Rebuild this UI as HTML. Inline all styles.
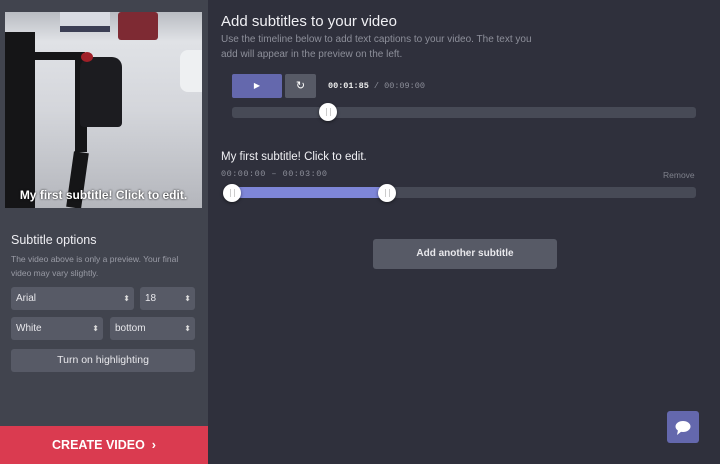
<!DOCTYPE html>
<html><head><style>
*{margin:0;padding:0;box-sizing:border-box}
body{width:720px;height:464px;overflow:hidden;background:#2f303c;font-family:"Liberation Sans",sans-serif;position:relative}
.left{position:absolute;left:0;top:0;width:208px;height:464px;background:#41444e}
.a{position:absolute}
.sel{position:absolute;background:#575a66;border-radius:3px;color:#e8e8ec;font-size:10px;padding-left:5px;line-height:24px;height:23px}
.sel:after{content:"⬍";position:absolute;right:4px;top:0;font-size:8px;color:#ddd}
.mono{font-family:"Liberation Mono",monospace}
.thumb{position:absolute;width:18px;height:18px;border-radius:50%;background:#fff;box-shadow:0 1px 3px rgba(0,0,0,.5)}
.thumb:after{content:"";position:absolute;left:7px;top:5px;width:3px;height:8px;border-left:1px solid #ccc;border-right:1px solid #ccc}
</style></head><body>
<div class="left">
 <div class="a" style="left:5px;top:12px;width:197px;height:196px;overflow:hidden;background:linear-gradient(180deg,#b9bcc2 0%,#e0e2e6 15%,#d4d6db 50%,#b4b6bc 100%)">
  <div class="a" style="left:55px;top:0;width:50px;height:20px;background:#d8dbe2;border-bottom:6px solid #3c3f55"></div>
  <div class="a" style="left:113px;top:0;width:40px;height:28px;background:#7e2a33;border-radius:3px"></div>
  <div class="a" style="left:175px;top:38px;width:25px;height:42px;background:#eef0f2;border-radius:8px 0 0 8px"></div>
  <div class="a" style="left:0;top:20px;width:30px;height:176px;background:#151517"></div>
  <div class="a" style="left:25px;top:40px;width:55px;height:8px;background:#151517"></div>
  <div class="a" style="left:70px;top:45px;width:12px;height:95px;background:#151517"></div>
  <div class="a" style="left:75px;top:45px;width:42px;height:70px;background:#1c1c20;border-radius:12px 10px 4px 4px"></div>
  <div class="a" style="left:76px;top:40px;width:12px;height:10px;background:#a02028;border-radius:50%"></div>
  <div class="a" style="left:65px;top:140px;width:15px;height:56px;background:#151517;transform:rotate(8deg)"></div>
  <div class="a" style="left:0;top:176px;width:197px;text-align:center;color:#fff;font-weight:bold;font-size:12px;text-shadow:0 0 2px #000">My first subtitle! Click to edit.</div>
 </div>
 <div class="a" style="left:11px;top:233px;color:#eeeef2;font-size:12.5px">Subtitle options</div>
 <div class="a" style="left:11px;top:252px;width:185px;color:#9a9ca6;font-size:8.5px;line-height:14px">The video above is only a preview. Your final video may vary slightly.</div>
 <div class="sel" style="left:11px;top:287px;width:123px">Arial</div>
 <div class="sel" style="left:140px;top:287px;width:55px">18</div>
 <div class="sel" style="left:11px;top:317px;width:92px">White</div>
 <div class="sel" style="left:110px;top:317px;width:85px">bottom</div>
 <div class="a" style="left:11px;top:349px;width:184px;height:23px;background:#575a66;border-radius:3px;color:#e8e8ec;font-size:10.5px;text-align:center;line-height:23px">Turn on highlighting</div>
 <div class="a" style="left:0;top:426px;width:208px;height:38px;background:#da3b50;color:#fff;font-size:12.5px;font-weight:bold;text-align:center;line-height:38px">CREATE VIDEO &nbsp;›</div>
</div>
<div class="a" style="left:221px;top:13px;color:#f0f0f4;font-size:15px">Add subtitles to your video</div>
<div class="a" style="left:221px;top:32px;width:322px;color:#8d8f9a;font-size:10px;line-height:15px">Use the timeline below to add text captions to your video. The text you add will appear in the preview on the left.</div>
<div class="a" style="left:232px;top:74px;width:50px;height:24px;background:#6468ad;border-radius:2px;color:#fff;font-size:8px;text-align:center;line-height:24px">▶</div>
<div class="a" style="left:285px;top:74px;width:31px;height:24px;background:#575a66;border-radius:2px;color:#fff;font-size:11px;text-align:center;line-height:24px">↻</div>
<div class="a mono" style="left:328px;top:81px;font-size:8.5px;color:#eee;font-weight:bold">00:01:85 <span style="color:#8d8f9a;font-weight:normal">/ 00:09:00</span></div>
<div class="a" style="left:232px;top:107px;width:464px;height:11px;background:#474a56;border-radius:3px"></div>
<div class="thumb" style="left:319px;top:103px"></div>
<div class="a" style="left:221px;top:151px;color:#f0f0f4;font-size:11.5px">My first subtitle! Click to edit.</div>
<div class="a mono" style="left:221px;top:169px;font-size:8.5px;color:#8d8f9a;letter-spacing:.5px">00:00:00 – 00:03:00</div>
<div class="a" style="left:663px;top:170px;font-size:8.5px;color:#7e808b">Remove</div>
<div class="a" style="left:232px;top:187px;width:464px;height:11px;background:#474a56;border-radius:3px"></div>
<div class="a" style="left:232px;top:187px;width:156px;height:11px;background:#7e86d8;border-radius:3px 0 0 3px"></div>
<div class="thumb" style="left:223px;top:184px"></div>
<div class="thumb" style="left:378px;top:184px"></div>
<div class="a" style="left:373px;top:239px;width:184px;height:30px;background:#575a66;border-radius:3px;color:#e8e8ec;font-size:10px;font-weight:bold;text-align:center;line-height:30px">Add another subtitle</div>
<div class="a" style="left:667px;top:411px;width:32px;height:32px;background:#6468ad;border-radius:3px">
 <svg width="32" height="32" viewBox="0 0 32 32"><ellipse cx="16" cy="15.5" rx="7.5" ry="5.5" fill="#fff"/><path d="M11 19 L10 24 L15 20 Z" fill="#fff"/></svg>
</div>
</body></html>
